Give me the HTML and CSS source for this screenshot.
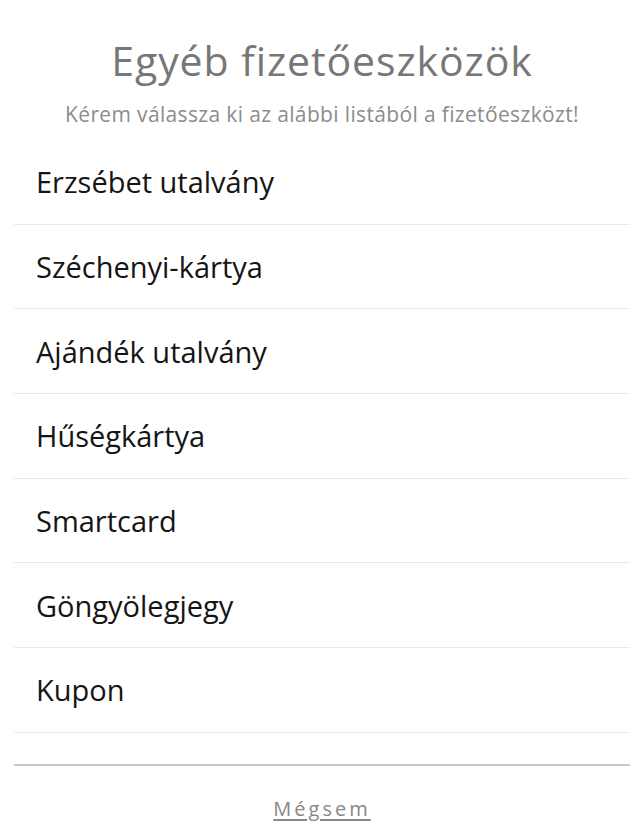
FILE: index.html
```html
<!DOCTYPE html>
<html lang="hu">
<head>
<meta charset="utf-8">
<link rel="stylesheet" href="styles.css">
<title>Egyéb fizetőeszközök</title>
</head>
<body>
<div class="page">
  <header class="header">
    <h1 class="title">Egyéb fizetőeszközök</h1>
    <p class="subtitle">Kérem válassza ki az alábbi listából a fizetőeszközt!</p>
  </header>
  <ul class="list">
    <li class="item">Erzsébet utalvány</li>
    <li class="item">Széchenyi-kártya</li>
    <li class="item">Ajándék utalvány</li>
    <li class="item">Hűségkártya</li>
    <li class="item">Smartcard</li>
    <li class="item">Göngyölegjegy</li>
    <li class="item">Kupon</li>
  </ul>
  <footer class="footer">
    <a class="cancel" href="#">Mégsem</a>
  </footer>
</div>
</body>
</html>
```

FILE: styles.css
```css
html, body {
  margin: 0;
  padding: 0;
  background: #fff;
}
body {
  font-family: "Open Sans", "Noto Sans", sans-serif;
  width: 640px;
  height: 838px;
  overflow: hidden;
}
.page {
  padding: 0 10px 0 14px;
  display: flex;
  flex-direction: column;
}
.header {
  padding-top: 36px;
  text-align: center;
}
.title {
  margin: 0;
  font-size: 41px;
  line-height: 48px;
  font-weight: 400;
  letter-spacing: 0.9px;
  color: #777;
}
.subtitle {
  margin: 15.5px 0 0;
  font-size: 21px;
  line-height: 28px;
  letter-spacing: 0.35px;
  color: #8c8c8c;
}
.list {
  list-style: none;
  margin: 12.5px 0 0;
  padding: 0;
  height: 626px;
  border-bottom: 2px solid #c6c6c6;
  box-sizing: border-box;
}
.item {
  box-sizing: border-box;
  height: 84.67px;
  border-bottom: 1px solid #e9e9e9;
  display: flex;
  align-items: center;
  padding-left: 22px;
  font-size: 29px;
  color: #151515;
}
.footer {
  padding-top: 29.5px;
  text-align: center;
}
.cancel {
  font-size: 20px;
  line-height: 26px;
  letter-spacing: 3px;
  color: #888;
  text-decoration: underline;
  text-underline-offset: 3px;
}
```
